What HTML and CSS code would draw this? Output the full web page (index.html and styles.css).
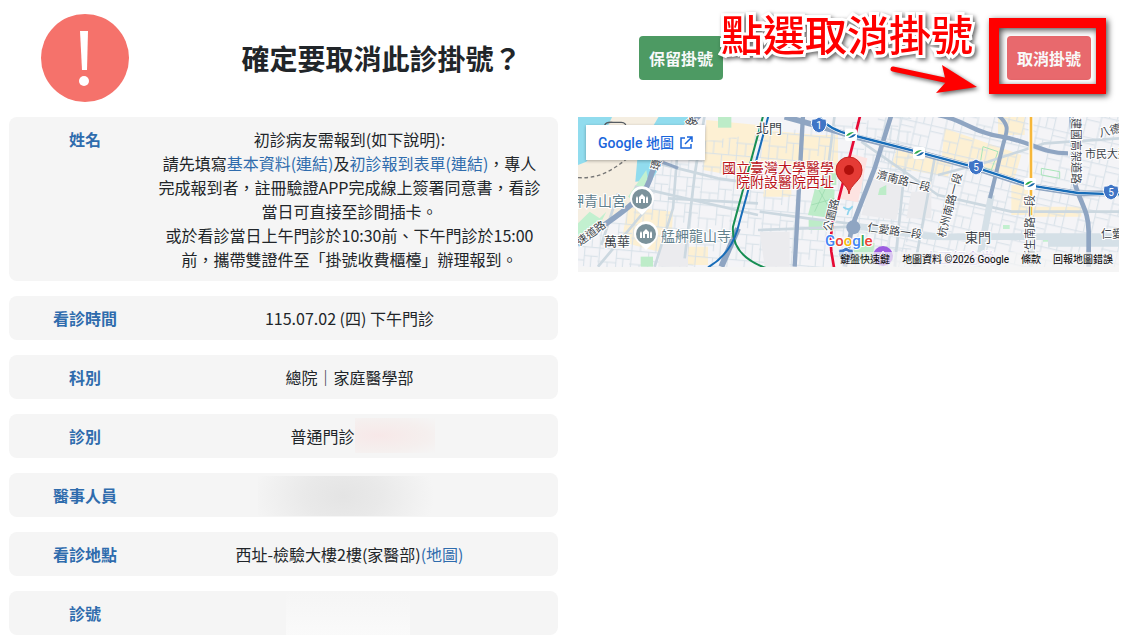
FILE: index.html
```html
<!DOCTYPE html>
<html lang="zh-Hant">
<head>
    <meta charset="UTF-8">
    <meta name="viewport" content="width=device-width, initial-scale=1.0">
    <title>取消掛號</title>
    <link rel="stylesheet" href="styles.css">
</head>
<body>
    <header class="page-row page-header">
        <div class="question">
            <svg class="warn-icon" viewBox="0 0 88 88" aria-hidden="true">
                <circle cx="44" cy="44" r="44" fill="#f5726b"/>
                <path d="M39 17h8l-1 39h-5z" fill="#fff"/>
                <circle cx="43" cy="67" r="5" fill="#fff"/>
            </svg>
            <h1 class="question-title">確定要取消此診掛號？</h1>
        </div>
        <div class="actions">
            <button type="button" class="btn btn-keep">保留掛號</button>
            <div class="cancel-wrap">
                <button type="button" class="btn btn-cancel">取消掛號</button>
                <span class="cancel-frame"></span>
                <span class="hint-text">點選取消掛號</span>
                <svg class="hint-arrow" viewBox="0 0 96 36" aria-hidden="true">
                    <path d="M6 9L62 21" stroke="#f00" stroke-width="5" stroke-linecap="round"/>
                    <path d="M55 5L90 27L49 33L59 22z" fill="#f00"/>
                </svg>
            </div>
        </div>
    </header>

    <main class="page-row">
        <dl class="info-list">
            <div class="info-item">
                <dt>姓名</dt>
                <dd>初診病友需報到(如下說明):<br>請先填寫<a href="#">基本資料(連結)</a>及<a href="#">初診報到表單(連結)</a>，專人完成報到者，註冊驗證APP完成線上簽署同意書，看診當日可直接至診間插卡。<br>或於看診當日上午門診於10:30前、下午門診於15:00前，攜帶雙證件至「掛號收費櫃檯」辦理報到。</dd>
            </div>
            <div class="info-item">
                <dt>看診時間</dt>
                <dd>115.07.02 (四) 下午門診</dd>
            </div>
            <div class="info-item">
                <dt>科別</dt>
                <dd>總院｜家庭醫學部</dd>
            </div>
            <div class="info-item">
                <dt>診別</dt>
                <dd class="masked">普通門診<span class="mask mask-type"></span></dd>
            </div>
            <div class="info-item">
                <dt>醫事人員</dt>
                <dd class="masked"><span class="mask mask-doctor"></span></dd>
            </div>
            <div class="info-item">
                <dt>看診地點</dt>
                <dd>西址-檢驗大樓2樓(家醫部)<a href="#">(地圖)</a></dd>
            </div>
            <div class="info-item">
                <dt>診號</dt>
                <dd class="masked"><span class="mask mask-number"></span></dd>
            </div>
        </dl>

        <section class="map" aria-label="地圖">
            <svg class="map-canvas" viewBox="0 0 541 150" preserveAspectRatio="xMinYMin slice">
                <defs>
                    <pattern id="streets" width="96" height="78" patternUnits="userSpaceOnUse" patternTransform="rotate(5)">
                        <path d="M0 2H96M0 42H56M56 28H96M4 0V78M56 2V60M30 42V78M76 28V78" fill="none" stroke="#d6e0e7" stroke-width="3"/>
                    </pattern>
                    <pattern id="streets-east" width="90" height="70" patternUnits="userSpaceOnUse" patternTransform="rotate(13)">
                        <path d="M0 2H90M0 38H50M50 20H90M3 0V70M50 2V70M26 38V70" fill="none" stroke="#d6e0e7" stroke-width="3"/>
                    </pattern>
                    <g id="shield">
                        <path d="M-7-6Q-4-5 0-8Q4-5 7-6Q9 0 6 4Q4 7 0 8Q-4 7-6 4Q-9 0-7-6z" fill="#3f75c6" stroke="#fff"/>
                    </g>
                    <g id="station">
                        <rect x="-6" y="-6" width="12" height="12" rx="2" fill="#fff"/>
                        <path d="M-5 1Q-3-3 3-3L0-1Q-2 1-5 1z" fill="#2eaa4a"/>
                        <path d="M5-1Q3 3-3 3L0 1Q2-1 5-1z" fill="#1765a8"/>
                    </g>
                    <g id="temple">
                        <path d="M0 16L-7 9A12 12 0 1 1 7 9z" fill="#fff"/>
                        <circle r="10" fill="#7b929b"/>
                        <path d="M-6 4V-1L-5-3L-4-1V4zM4 4V-1L5-3L6-1V4zM-3 4V-2L0-5L3-2V4H1V0H-1V4z" fill="#fff"/>
                    </g>
                </defs>

                <!-- terrain and roads, drawn on a 1623 wide grid -->
                <g transform="translate(0 -2) scale(.33333)" fill="none">
                    <path d="M0 0H1623V460H0z" fill="#f4f4f7"/>
                    <g fill="#fdf0d3">
                        <path d="M385 15L540 30L515 190L375 165z"/>
                        <path d="M150 275L285 290L278 420L130 380z"/>
                        <path d="M300 395H390V450H295z"/>
                        <path d="M560 45L770 65L750 175L545 160z"/>
                        <path d="M560 205H640V245H555z"/>
                        <path d="M700 60H780V180H690z"/>
                        <path d="M955 105L1120 140L1110 185L940 155z"/>
                        <path d="M1100 40L1330 120L1310 190L1090 140z"/>
                        <path d="M1300 210H1350V300H1300zM1360 275H1510V305H1350z"/>
                        <path d="M1260 6H1340V60H1260z"/>
                    </g>
                    <path d="M200 100L1000 0V460H0V370z" fill="url(#streets)"/>
                    <path d="M900 0H1623V460H880z" fill="url(#streets-east)"/>
                    <g fill="#ebebee">
                        <path d="M880 190L975 215L955 315L850 300z"/>
                        <path d="M545 350H635V455H560z"/>
                        <path d="M250 385H330V455H240z"/>
                        <path d="M1000 230H1060V310H985z"/>
                    </g>

                    <path d="M0 0H340L215 190L150 270L0 375z" fill="#f5eee1"/>
                    <path d="M0 0H105L60 95L25 140L0 150z" fill="#91dcee"/>
                    <path d="M245 0H335L222 195L172 200L180 110z" fill="#91dcee"/>
                    <path d="M205 165L212 210L165 255L150 245z" fill="#c2f0cf"/>
                    <path d="M0 325L35 290L65 310L85 290L60 340L0 370z" fill="#c2f0cf"/>
                    <path d="M0 188C70 192 110 160 155 125S190 85 210 60" stroke="#777" stroke-width="4" stroke-dasharray="11 8"/>
                    <path d="M80 30Q85 20 105 22H130Q145 22 145 40" stroke="#555b62" stroke-width="4"/>

                    <g fill="#bdecc8">
                        <path d="M420 6H460V38H420z"/>
                        <path d="M715 205L770 225L765 310L690 300z"/>
                        <path d="M692 312H740V345H692z"/>
                        <path d="M740 175H775V210H735z"/>
                        <path d="M835 375L890 385L880 445L800 440z"/>
                        <path d="M188 425H225V455H188z"/>
                        <path d="M905 220L925 210V240H900z"/>
                    </g>
                    <path d="M1215 95L1260 110L1240 165L1205 155zM1390 160L1445 170V190L1390 180z" stroke="#a8e5b9" stroke-width="3"/>
                    <path d="M720 220L760 290M700 270L770 250M710 290L745 215" stroke="#96d8aa" stroke-width="2"/>
                    <path d="M812 115L868 130L840 262L780 250z" fill="#fde3e1"/>
                    <path d="M1395 360H1430V380H1395zM1275 330H1295V342H1275z" fill="#c2f0cf"/>
                    <path d="M796 276Q812 290 824 274L812 288L808 300" stroke="#8ed4ee" stroke-width="5"/>

                    <!-- secondary roads -->
                    <g stroke="#ccd8e0" stroke-width="8">
                        <path d="M170 215L540 300M300 90L285 280L230 455M215 270L60 455"/>
                        <path d="M120 235L70 390M240 145L420 190L560 210"/>
                        <path d="M380 0L350 180L320 430M270 250L540 265"/>
                        <path d="M545 290L690 310L850 330M540 345L830 335"/>
                        <path d="M770 0L745 200"/>
                        <path d="M850 80L1080 240L1300 290H1623"/>
                        <path d="M1070 130L1010 455M980 160L950 455"/>
                        <path d="M1080 180L1230 140L1400 85L1623 70"/>
                    </g>
                    <g stroke="#d5e0e7" stroke-width="20">
                        <path d="M830 335C950 340 1000 370 1140 365H1623"/>
                        <path d="M1240 240L1200 455"/>
                        <path d="M1410 385H1623"/>
                    </g>

                    <!-- expressways -->
                    <g stroke="#8fa5c2">
                        <path d="M365 0C295 70 235 115 215 195C190 270 80 320 0 390" stroke-width="16"/>
                        <path d="M240 138Q280 150 300 160" stroke-width="10"/>
                        <path d="M480 340L430 455" stroke-width="18"/>
                        <path d="M675 0L650 455" stroke-width="13"/>
                        <path d="M620 5L740 38L820 62L1020 112L1195 160L1360 214L1500 235H1623" stroke-width="17"/>
                        <path d="M940 0L890 160L822 335L800 455" stroke-width="14"/>
                        <path d="M1080 0C1150 10 1190 55 1270 65C1360 80 1390 115 1470 115" stroke-width="13"/>
                        <path d="M1260 0C1300 35 1285 50 1275 90L1236 250" stroke-width="12"/>
                        <path d="M1480 0L1492 210C1510 270 1532 290 1532 350V455" stroke-width="14"/>
                    </g>
                    <circle cx="826" cy="337" r="21" fill="#8fa5c2"/>

                    <!-- metro lines -->
                    <path d="M556 0L465 335C460 400 500 445 600 470" stroke="#178e53" stroke-width="6"/>
                    <path d="M572 0L478 345Q455 420 390 457" stroke="#176cb8" stroke-width="6"/>
                    <path d="M720 0Q750 45 822 60L1025 112L1195 158L1360 212L1500 234L1623 238" stroke="#fff" stroke-width="11"/>
                    <path d="M720 0Q750 45 822 60L1025 112L1195 158L1360 212L1500 234L1623 238" stroke="#176cb8" stroke-width="7"/>
                    <path d="M847 0L770 300Q755 350 760 410L768 457" stroke="#e60a35" stroke-width="8"/>
                    <path d="M1359 0V300" stroke="#fff" stroke-width="14"/>
                    <path d="M1359 0V300" stroke="#f6b73a" stroke-width="8"/>
                    <path d="M1359 330V457" stroke="#d5e0e7" stroke-width="14"/>
                </g>

                <use href="#station" x="273" y="18"/>
                <use href="#station" x="341" y="36"/>
                <use href="#station" x="452" y="67"/>
                <use href="#temple" x="64" y="82"/>
                <use href="#temple" x="68" y="117"/>
                <use href="#shield" x="241" y="8"/>
                <use href="#shield" x="398" y="50"/>
                <use href="#shield" x="533" y="75"/>
                <use href="#shield" x="268" y="138"/>
                <g class="shield-text">
                    <text x="241" y="12">1</text>
                    <text x="398" y="54">5</text>
                    <text x="533" y="79">5</text>
                    <text x="268" y="142">9</text>
                </g>
                <circle cx="305" cy="139" r="10" fill="#9c5ce0"/>
                <path d="M300 142V137L302 139L305 134L308 139L310 137V142z" fill="none" stroke="#fff"/>

                <g class="map-label">
                    <text x="178" y="16">北門</text>
                    <text x="26" y="129">萬華</text>
                    <text x="387" y="125">東門</text>
                </g>
                <g class="map-label road-label">
                    <text transform="translate(298 61) rotate(14)">濟南路一段</text>
                    <text transform="translate(289 114) rotate(8)">仁愛路一段</text>
                    <text transform="translate(253 115) rotate(-76)">公園路</text>
                    <text transform="translate(367 121) rotate(-75)">杭州南路一段</text>
                    <text transform="translate(456 144) rotate(-90)">新生南路一段</text>
                    <text transform="translate(494 1) rotate(90)">建國高架道路</text>
                    <text transform="translate(522 20) rotate(-14)">八德路</text>
                    <text x="507" y="41">市民大道</text>
                    <text x="523" y="121">仁愛路</text>
                    <text transform="translate(80 54) rotate(-72)">環</text>
                    <text transform="translate(112 12) rotate(-40)">路</text>
                    <text transform="translate(2 129) rotate(-36)">速道路</text>
                </g>
                <g class="map-label place-label">
                    <text x="48" y="89" text-anchor="end">艋舺青山宮</text>
                    <text x="83" y="124">艋舺龍山寺</text>
                </g>
                <text class="map-label metro-label" x="346" y="146">中正紀念堂</text>
                <g class="map-label hospital-label" text-anchor="end">
                    <text x="256" y="56">國立臺灣大學醫學</text>
                    <text x="256" y="70">院附設醫院西址</text>
                </g>
                <path d="M271 77C270 67 258 64 258 53A13 13 0 0 1 284 53C284 64 272 67 271 77z" fill="#e53b35" stroke="#c5221f"/>
                <circle cx="271" cy="53" r="5" fill="#b0100c"/>
                <text class="map-logo" x="247" y="129"><tspan fill="#4285f4">G</tspan><tspan fill="#ea4335">o</tspan><tspan fill="#fbbc04">o</tspan><tspan fill="#4285f4">g</tspan><tspan fill="#34a853">l</tspan><tspan fill="#ea4335">e</tspan></text>
            </svg>
            <a class="map-open" href="#">Google 地圖
                <svg viewBox="0 0 14 14" aria-hidden="true"><path d="M6 2H2V12H12V8M8 1H13V6M13 1L6 8" fill="none" stroke="currentColor" stroke-width="1.5"/></svg>
            </a>
            <div class="map-credits">
                <button type="button">鍵盤快速鍵</button>
                <span>地圖資料 ©2026 Google</span>
                <a href="#">條款</a>
                <a href="#">回報地圖錯誤</a>
            </div>
        </section>
    </main>
</body>
</html>
```

FILE: styles.css
```css
* {
    box-sizing: border-box;
}
body {
    margin: 0;
    font-family: 'Noto Sans CJK TC', 'Noto Sans', sans-serif;
    font-size: 16px;
    line-height: 24px;
    color: #212529;
    background: #ffffff;
}
a {
    color: #2f6cad;
    text-decoration: none;
}
.page-row {
    display: grid;
    grid-template-columns: 549fr 541fr;
    column-gap: 20px;
    align-items: start;
    padding: 0 8px 0 9px;
}
.page-header {
    align-items: center;
    padding-top: 14px;
    padding-bottom: 15px;
}

/* header */
.question {
    display: flex;
    align-items: center;
    padding-left: 32px;
}
.warn-icon {
    flex: none;
    width: 88px;
    height: 88px;
}
.question-title {
    flex: 1;
    margin: 0;
    padding-left: 76px;
    font-size: 28px;
    line-height: 36px;
    font-weight: 700;
    text-align: center;
}
.actions {
    display: flex;
    justify-content: space-between;
    padding: 0 28px 0 61px;
}
.btn {
    display: block;
    padding: 10px;
    border: 0;
    border-radius: 4px;
    font: inherit;
    font-weight: 700;
    color: #f8f9fa;
}
.btn-keep {
    background: #4d9a63;
}
.btn-cancel {
    background: #e8696d;
}
.cancel-wrap {
    position: relative;
}
.cancel-frame {
    position: absolute;
    inset: -18px -15px -14px -18px;
    border: 10px solid #ff0000;
    filter: drop-shadow(2px 2px 3px rgba(0, 0, 0, 0.7));
    pointer-events: none;
}
.hint-text {
    position: absolute;
    right: 118px;
    top: -33px;
    font-size: 42px;
    line-height: 60px;
    font-weight: 500;
    color: #ff0000;
    white-space: nowrap;
    -webkit-text-stroke: 6px #ffffff;
    paint-order: stroke fill;
    filter: drop-shadow(2px 2px 2px rgba(0, 0, 0, 0.6));
}
.hint-arrow {
    position: absolute;
    right: 108px;
    top: 24px;
    width: 96px;
    height: 36px;
    overflow: visible;
    filter: drop-shadow(2px 2px 2px rgba(0, 0, 0, 0.6));
}

/* appointment details */
.info-list {
    display: grid;
    gap: 15px;
    margin: 0;
}
.info-item {
    display: grid;
    grid-template-columns: 146px 1fr;
    padding: 10px 17px 10px 3px;
    border-radius: 8px;
    background: #f5f5f5;
    text-align: center;
}
.info-item dt {
    font-weight: 700;
    color: #2f6cad;
}
.info-item dd {
    margin: 0;
}
.masked {
    display: flex;
    justify-content: center;
    height: 24px;
}
.mask {
    flex: none;
}
.mask-type {
    width: 80px;
    height: 35px;
    margin: -6px -26px 0 0;
    background: radial-gradient(ellipse at 30% 50%, #f7e8e8, #f5efee 60%, #f5f5f5);
}
.mask-doctor {
    width: 184px;
    height: 40px;
    margin-top: -7px;
    background: radial-gradient(ellipse 92px 60px at 46% 50%, #e4e4e4, #e9e9e9 40%, #f5f5f5);
}
.mask-number {
    width: 124px;
    height: 46px;
    margin: -10px 4px 0 0;
    background: linear-gradient(#f5f5f5, #fafafa);
}

/* map */
.map {
    position: relative;
    padding-bottom: 5px;
    background: #f5f5f5;
}
.map-canvas {
    display: block;
    width: 100%;
    height: 150px;
}
.map-label {
    font-size: 13px;
    fill: #3c4349;
    stroke: #ffffff;
    stroke-width: 2px;
    paint-order: stroke;
}
.road-label {
    font-size: 11px;
}
.place-label {
    font-size: 14px;
    fill: #62808c;
}
.metro-label {
    font-size: 14px;
    fill: #c9b8ea;
}
.hospital-label {
    font-size: 14px;
    fill: #b9131a;
}
.shield-text {
    font-family: Roboto, sans-serif;
    font-size: 10px;
    fill: #ffffff;
    text-anchor: middle;
}
.map-logo {
    font-family: Roboto, sans-serif;
    font-size: 15px;
    font-weight: 500;
    stroke: #ffffff;
    stroke-width: 2px;
    paint-order: stroke;
}
.map-open {
    position: absolute;
    left: 8px;
    top: 8px;
    display: flex;
    align-items: center;
    gap: 5px;
    height: 35px;
    padding: 0 12px;
    background: #ffffff;
    box-shadow: 0 1px 3px rgba(0, 0, 0, 0.3);
    font-family: Roboto, 'Noto Sans CJK TC', sans-serif;
    font-size: 14px;
    font-weight: 500;
    color: #1a66dc;
}
.map-open svg {
    width: 14px;
    height: 14px;
}
.map-credits {
    position: absolute;
    right: 0;
    bottom: 5px;
    display: flex;
    gap: 12px;
    padding: 0 6px 0 2px;
    background: rgba(245, 245, 245, 0.7);
    font-family: Roboto, 'Noto Sans CJK TC', sans-serif;
    font-size: 10px;
    line-height: 15px;
    color: #000000;
}
.map-credits a {
    color: inherit;
}
.map-credits button {
    padding: 0;
    border: 0;
    background: none;
    font: inherit;
    color: inherit;
}
```
